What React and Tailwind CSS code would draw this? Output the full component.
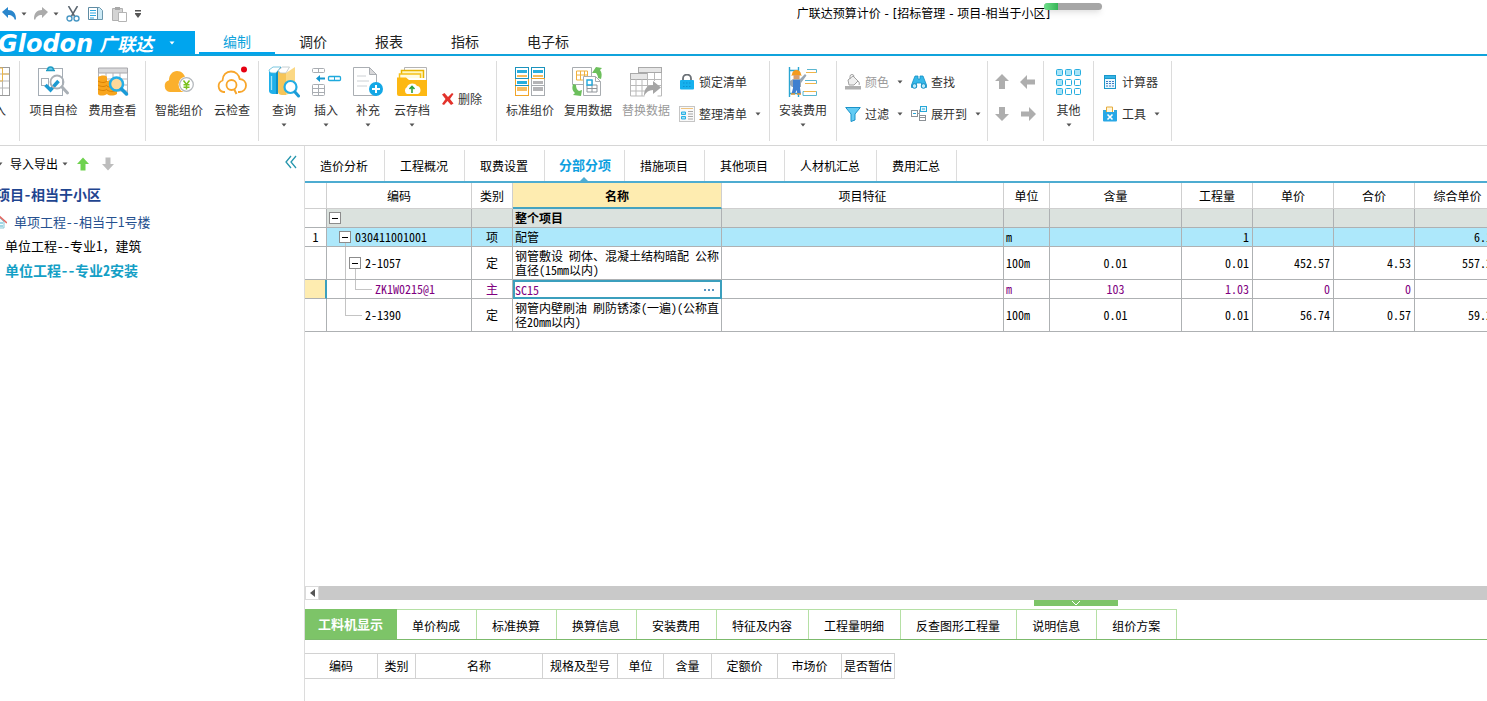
import React from "react";

/* ---------- small shared pieces ---------- */

function Caret({ className = "text-[#555]" }) {
  return (
    <svg width="6" height="4" viewBox="0 0 6 4" className={`shrink-0 ${className}`} aria-hidden="true">
      <path d="M.5 .5h5L3 3.500z" fill="currentColor" />
    </svg>
  );
}

function Svg({ w = 32, h = 32, children }) {
  return (
    <svg width={w} height={h} viewBox={`0 0 ${w} ${h}`} fill="none" className="shrink-0" aria-hidden="true">
      {children}
    </svg>
  );
}

/* ---------- ribbon icons ---------- */

const SheetIcon = () => (
  <Svg>
    <rect x="2.5" y="1.5" width="29" height="28" fill="#fff" stroke="#9a9a9a" />
    <path d="M3 8h28M3 15h28M3 22h28" stroke="#b5b5b5" />
    <path d="M10 2v27M17 2v27M24.500 2v27" stroke="#b5b5b5" />
    <path d="M17 2h7.500v13H17zM24.500 8H31" stroke="#eab54a" />
  </Svg>
);

const CheckIcon = () => (
  <Svg>
    <rect x="0.500" y="2.500" width="24" height="27" fill="#fff" stroke="#a5adb5" />
    <path d="M8 4.500h9M9.500 4.500c0-2 1-3.500 3-3.500s3 1.500 3 3.500" stroke="#1f9cc4" strokeWidth="1.500" fill="#6ccdea" />
    <rect x="3.500" y="12.500" width="7" height="7" stroke="#a5adb5" />
    <path d="M7.500 19l5 5 8-9" stroke="#1b9ad2" strokeWidth="3.500" />
    <circle cx="19" cy="16" r="6.500" stroke="#aab0b6" strokeWidth="1.800" />
    <path d="M24 21l5.500 6" stroke="#aab0b6" strokeWidth="3" strokeLinecap="round" />
  </Svg>
);

const FeeIcon = () => (
  <Svg>
    <path d="M1.500 2h29v5h-29z" fill="#d9d9db" stroke="#a8a8ac" />
    <path d="M1.500 7v6M30.500 7v20M9 7v8M16 7v6M23 7v6M1 13h29M18 19h12M20 25h10" stroke="#b4b4b8" />
    <path d="M1 11c3-2 8-2 9 0v4c4-2 9-1 10 1v12c-3 2-8 2-10 0-3 2-8 2-9 0z" fill="#f8a51d" />
    <path d="M1 15c3 2 7 2 9 0M1 19c3 2 7 2 9 0M1 23c3 2 7 2 9 0M10 20c3 2 7 2 9 0M10 24c3 2 7 2 9 0" stroke="#d98206" />
    <circle cx="19.500" cy="18" r="6.500" fill="#ffd89a" stroke="#25aee6" strokeWidth="2.500" />
    <path d="M24.500 23l5 5" stroke="#1a9bd8" strokeWidth="3.500" strokeLinecap="round" />
  </Svg>
);

const CloudYenIcon = () => (
  <Svg>
    <path d="M7 26a6 6 0 0 1-1-11.700C6 9 9.500 5 14 5s8 3.500 8.500 8c5 0 7 3.500 7 6.500s-2 6.500-6 6.500z" fill="#fbb02d" />
    <circle cx="23.500" cy="18.500" r="8" fill="#fff" />
    <circle cx="23.500" cy="18.500" r="6.800" stroke="#b5b9bd" strokeWidth="1.300" fill="#fff" />
    <path d="M20.500 14.500l3 4 3-4M23.500 18.500v5M20.500 18.700h6M20.500 21.200h6" stroke="#7cc21e" strokeWidth="1.500" />
  </Svg>
);

const CloudCheckIcon = () => (
  <Svg>
    <path d="M9 26H7.500a6 6 0 0 1-1-11.500C6.500 9 10.500 5.500 15 5.500s8 3 8.700 7.500c4 .3 6.300 3.200 6.300 6.500s-2.500 6.500-6.500 6.500H22" stroke="#f8a62b" strokeWidth="1.800" />
    <circle cx="15.500" cy="19" r="5" stroke="#f8a62b" strokeWidth="1.800" />
    <path d="M18 23l2.500 5" stroke="#f8a62b" strokeWidth="2" />
    <circle cx="28" cy="3.500" r="3" fill="#e60012" />
  </Svg>
);

const BooksIcon = () => (
  <Svg>
    <path d="M1 4c0 2 2 3 4 3h3v21H5c-2 0-4-1-4-3z" fill="#1fb0ea" />
    <path d="M1 4l4-3h8L8 7H5C3 7 1 6 1 4z" fill="#fff" stroke="#58b9d8" strokeWidth=".8" />
    <path d="M3.500 10v14" stroke="#a5e4f8" strokeWidth="1.300" />
    <path d="M8 7l5-6v4l-3 4v19H8z" fill="#0f8fc4" />
    <path d="M10 4c0 2 2 3 4 3h4v22h-4c-2 0-4-1-4-3z" fill="#f6c558" />
    <path d="M10.500 4l4-3h7L18 7h-4c-2 0-3.500-1-3.500-3z" fill="#fff" stroke="#b9c4c8" strokeWidth=".8" />
    <path d="M18 7l9-6v24l-9 4z" fill="#fbd884" />
    <circle cx="22.500" cy="21" r="6" fill="#fff" stroke="#23ade5" strokeWidth="2.200" />
    <path d="M27 26l3.500 4" stroke="#1a9bd8" strokeWidth="3" strokeLinecap="round" />
  </Svg>
);

const InsertIcon = () => (
  <Svg>
    <rect x="2.500" y="2.500" width="12" height="4" rx="1" stroke="#a9adb2" />
    <path d="M8.500 2v5" stroke="#a9adb2" />
    <rect x="18.500" y="10.500" width="12" height="4" rx="1" stroke="#1fa9dc" strokeWidth="1.300" />
    <path d="M24.500 10v5" stroke="#1fa9dc" />
    <path d="M6 12.500l4-3.500v2.500h5v2h-5V16z" fill="#1497d0" />
    <rect x="2.500" y="18.500" width="12" height="11" rx="1" stroke="#a9adb2" />
    <path d="M8.500 18v12M2 22.500h13M2 26.500h13" stroke="#a9adb2" />
  </Svg>
);

const SupplementIcon = () => (
  <Svg>
    <path d="M1.500 1.500h16l7 7v21h-23z" fill="#fff" stroke="#aaaeb3" />
    <path d="M17.500 1.500v7h7z" fill="#d8d8da" stroke="#aaaeb3" />
    <path d="M5 10h9M5 15h12M5 20h10" stroke="#ccd0d4" />
    <circle cx="24" cy="23" r="7" fill="#14a8e6" />
    <path d="M24 19v8M20 23h8" stroke="#fff" strokeWidth="2" />
  </Svg>
);

const CloudFolderIcon = () => (
  <Svg>
    <path d="M8.500 11V1.500h22V28" stroke="#b4b4b4" fill="#fff" />
    <path d="M5.500 11V4.500h22V12" stroke="#e8b400" fill="#fff6c0" strokeWidth="1.500" />
    <path d="M3.500 12V8h21v4" stroke="#f5c11a" fill="#fffbe0" strokeWidth="1.500" />
    <path d="M1 11.500h9l3 2.500h18v16H3a2 2 0 0 1-2-2z" fill="#fdb813" />
    <path d="M11 28a4 4 0 0 1 0-7c1-4 8-5 10-1 4 0 5 7 1 8z" fill="#fff" />
    <path d="M16 27v-6M13.500 23l2.500-2.500 2.500 2.500" stroke="#2fa03c" strokeWidth="1.600" />
  </Svg>
);

const DeleteIcon = () => (
  <Svg w={13} h={14}>
    <path d="M1 2.500L3.500 1l3.500 4L11 1l1.500 1L9 7l3.500 4.500L10 13 6.500 9 3 13l-2-1 3.500-5z" fill="#e3322b" />
  </Svg>
);

const StandardIcon = () => (
  <Svg>
    <rect x="1.500" y="1.500" width="13" height="11" fill="#fff" stroke="#1b93bd" />
    <rect x="3" y="4" width="10" height="3" fill="#27aede" />
    <rect x="3" y="9" width="10" height="2" fill="#f6bb5c" />
    <rect x="1.500" y="12.500" width="13" height="17" fill="#fff" stroke="#f0a52a" />
    <rect x="3" y="15" width="10" height="3" fill="#27aede" />
    <rect x="3" y="21" width="10" height="4" fill="#f8bd60" />
    <path d="M1 12.500h14M1 19.500h14" stroke="#1b93bd" />
    <rect x="17.500" y="1.500" width="13" height="11" fill="#fff" stroke="#1b93bd" />
    <rect x="19" y="4" width="10" height="3" fill="#27aede" />
    <rect x="19" y="9" width="10" height="2" fill="#f6bb5c" />
    <rect x="17.500" y="12.500" width="13" height="17" fill="#fff" stroke="#a8acb0" />
    <rect x="19" y="15" width="10" height="3" fill="#b4b4b6" />
    <rect x="19" y="21" width="10" height="4" fill="#b4b4b6" />
    <path d="M17 12.500h14" stroke="#f0a52a" />
    <path d="M17 19.500h14" stroke="#a8acb0" />
  </Svg>
);

const ReuseIcon = () => (
  <Svg>
    <path d="M.5 1.500h19v17H.5z" fill="#fff" stroke="#a8acb0" />
    <path d="M4.500 5h11v9h-11zM4.500 9h11M8.500 5v9M12.500 5v9" stroke="#f0b03d" />
    <path d="M11.500 10.500h12l5 5v14h-17z" fill="#fff" stroke="#a8acb0" />
    <path d="M23.500 10.500v5h5" stroke="#a8acb0" />
    <path d="M15 19h10v7H15zM15 22.500h10M20 14v12" stroke="#8f9499" />
    <path d="M15 14h5v5h-5z" stroke="#22a8dc" strokeWidth="1.400" fill="#fff" />
    <path d="M20 7l4-6 6 1-2 2c2 3 2 5 1 9l-3-1c0-2-1-4-2-5z" fill="#6cbf5c" />
    <path d="M10 24l-1 6-8-1 2-2c-3-3-3-5-2-9l3 1c0 3 1 5 3 6z" fill="#6cbf5c" />
  </Svg>
);

const ReplaceIcon = () => (
  <Svg>
    <rect x="8.500" y="1.500" width="23" height="5" fill="#e6e6e6" stroke="#a9a9a9" />
    <rect x="0.500" y="7.500" width="17" height="6" fill="#e6e6e6" stroke="#a9a9a9" />
    <path d="M.5 13v17h14M.5 19.500h22M.5 25h15M6 13v17M12 13v17M17.500 7v18M24.500 7v8M31.500 7v23h-4M17 13.500h14M26 19.500h5" stroke="#b9b9b9" />
    <path d="M14 30c0-8 4-11 9-11v-4l8 6.500-8 6.500v-4c-4 0-7 2-9 6z" fill="#a5a5a5" />
  </Svg>
);

const LockIcon = () => (
  <Svg w={16} h={16}>
    <path d="M4 7V4.500a4 4 0 0 1 8 0V7" stroke="#6a7076" strokeWidth="1.800" />
    <rect x="1" y="6" width="14" height="9.500" rx="1" fill="#16b1ee" />
    <path d="M4 9h8M4 12.500h8" stroke="#0d8fd0" strokeDasharray="1.500 1.500" />
  </Svg>
);

const TidyIcon = () => (
  <Svg w={16} h={16}>
    <rect x=".5" y=".5" width="15" height="15" fill="#f9f9f9" stroke="#c5c5c5" />
    <path d="M2 2.500h12" stroke="#f0c37d" />
    <path d="M2.500 6h4v2.500h-4zM2.500 10.500h4V13h-4z" stroke="#27b0e4" fill="#9ddff7" />
    <path d="M9 5.500h5M9 8h5M9 10.500h5M9 13h5" stroke="#a8a8a8" />
  </Svg>
);

const InstallIcon = () => (
  <Svg>
    <path d="M2.500 1v30M11.500 1v30M2 4.500h10M2 27.500h10" stroke="#2aa5d2" strokeWidth="1.400" />
    <path d="M5 8.500a4.500 4.500 0 0 1 9 0l1 1H4z" fill="#f39a1e" />
    <rect x="6.500" y="9" width="6" height="4.500" fill="#d99e6c" />
    <path d="M3 15l3-2h7l5-5 1.500 1.500L14 17v4H5l-2-2z" fill="#9aa7b5" />
    <path d="M6 14h7v8l1 6h-3.500L9.500 24 8 28H4.500L6 22z" fill="#3f7fd0" />
    <path d="M4 28h4M10 28h4" stroke="#e09a38" strokeWidth="1.500" />
    <path d="M20 3.500h9.500v3H19M18 14.500h11.500v3H18M16 25.500h13.500v4H16z" stroke="#5bb6cf" />
    <path d="M19 6.500h10M18 17.500h11M17 25.500h12" stroke="#f0b549" />
  </Svg>
);

const BucketIcon = () => (
  <Svg w={16} h={16}>
    <path d="M3 6l5-4 5 5-4 4H4z" fill="#efefef" stroke="#a0a0a0" />
    <path d="M5 5V2.500a2 2 0 0 1 4 0M13 7c1.500 1 1.500 3 1 4" stroke="#a0a0a0" />
    <rect x="0" y="12" width="16" height="3.500" fill="#b0b0b0" />
  </Svg>
);

const FunnelIcon = () => (
  <Svg w={16} h={16}>
    <path d="M.7 1.500h14.600L10 8v6l-4 1.500V8z" fill="#63cbf3" stroke="#1b93c9" />
  </Svg>
);

const BinocularsIcon = () => (
  <Svg w={16} h={16}>
    <path d="M4 2h3v3h2V2h3l3.500 9v2.500h-5V9h-5v4.500h-5V11z" fill="#35b8e9" stroke="#138fc4" strokeWidth=".8" />
    <circle cx="3.500" cy="12" r="2.300" fill="#bdeafb" stroke="#138fc4" />
    <circle cx="12.500" cy="12" r="2.300" fill="#bdeafb" stroke="#138fc4" />
  </Svg>
);

const ExpandIcon = () => (
  <Svg w={16} h={16}>
    <rect x=".5" y="4.500" width="6" height="6" fill="#fff" stroke="#8c9196" />
    <path d="M2 7.500h3" stroke="#27a7d8" />
    <path d="M7 7.500h1.500M8.500 3.500v9" stroke="#9aa0a5" />
    <rect x="9.500" y=".5" width="6" height="5" fill="#e8f7fd" stroke="#27a7d8" />
    <path d="M11 3h3" stroke="#27a7d8" />
    <rect x="8.500" y="9.500" width="6" height="5" fill="#fff" stroke="#8c9196" />
    <path d="M9 11.500h5" stroke="#8c9196" />
  </Svg>
);

const MoveArrow = ({ d }) => (
  <Svg w={16} h={16}>
    <path d={d} fill="#aeaeae" />
  </Svg>
);

const GridIcon = () => (
  <Svg>
    {[3, 13, 22].map((y, r) =>
      [3, 12, 21].map((x, c) => (
        <rect key={`${x}-${y}`} x={x + 0.5} y={y + 0.5} width="6" height="6" rx="1" fill={r === 0 || c === 0 ? "#a8e4f8" : "#fff"} stroke="#27aee0" />
      ))
    )}
  </Svg>
);

const CalculatorIcon = () => (
  <Svg w={16} h={16}>
    <rect x="2.500" y="1.500" width="11" height="13" fill="#eaf8fd" stroke="#1a97ca" />
    <rect x="2.500" y="1.500" width="11" height="3" fill="#35b4e6" stroke="#1a97ca" />
    <path d="M4 7.500h8M4 9.500h8M4 12h8" stroke="#3d79c4" strokeDasharray="2 1" />
  </Svg>
);

const ToolsIcon = () => (
  <Svg w={16} h={16}>
    <path d="M1 4h3v3H1zM12 4h3v3h-3z" fill="#35a9dc" />
    <path d="M4.500 1h6v6h-6z" fill="#fff5d9" stroke="#e5ab3c" />
    <rect x="1" y="6" width="14" height="9.500" rx="1" fill="#28a8e6" />
    <path d="M5.500 8.500l5 5M10.500 8.500l-5 5" stroke="#fff" strokeWidth="1.600" />
  </Svg>
);

/* ---------- ribbon controls ---------- */

function BigButton({ icon, label, width, caret, muted }) {
  return (
    <button type="button" className={`flex shrink-0 flex-col items-center pt-[5px] ${width}`}>
      {icon}
      <span className={`mt-1 text-xs leading-4 whitespace-nowrap ${muted ? "text-[#999]" : "text-[#333]"}`}>{label}</span>
      {caret && <Caret className="mt-[5px] text-[#555]" />}
    </button>
  );
}

function RowButton({ icon, label, caret, muted }) {
  return (
    <button type="button" className="flex h-4 items-center gap-1 whitespace-nowrap">
      {icon}
      <span className={`text-xs leading-4 ${muted ? "text-[#999]" : "text-[#333]"}`}>{label}</span>
      {caret && <Caret className="ml-1 text-[#555]" />}
    </button>
  );
}

function Group({ className, children }) {
  return <div className={`flex h-20 shrink-0 border-r border-[#dcdcdc] ${className}`}>{children}</div>;
}

const UP = "M8 0l7 7h-4v8H5V7H1z";
const DOWN = "M8 15l7-7h-4V1H5v7H1z";
const LEFT = "M0 8l7-7v4.500h8v5H7V15z";
const RIGHT = "M16 8L9 1v4.500H1v5h8V15z";

function Ribbon() {
  return (
    <div className="flex h-[90px] overflow-hidden border-b border-[#d6d6d6] pt-[5px]">
      <Group className="w-5 justify-end overflow-hidden pr-[5px]">
        <BigButton icon={<SheetIcon />} label="导入" width="w-10" />
      </Group>
      <Group className="w-[126px] pl-1">
        <BigButton icon={<CheckIcon />} label="项目自检" width="w-[59px]" />
        <BigButton icon={<FeeIcon />} label="费用查看" width="w-[59px]" />
      </Group>
      <Group className="w-[113px] pl-1">
        <BigButton icon={<CloudYenIcon />} label="智能组价" width="w-[58px]" />
        <BigButton icon={<CloudCheckIcon />} label="云检查" width="w-12" />
      </Group>
      <Group className="w-[238px] pl-1">
        <BigButton icon={<BooksIcon />} label="查询" width="w-[42px]" caret />
        <BigButton icon={<InsertIcon />} label="插入" width="w-[42px]" caret />
        <BigButton icon={<SupplementIcon />} label="补充" width="w-[42px]" caret />
        <BigButton icon={<CloudFolderIcon />} label="云存档" width="w-[46px]" caret />
        <div className="flex items-center pb-1 pl-1.5">
          <RowButton icon={<DeleteIcon />} label="删除" />
        </div>
      </Group>
      <Group className="w-[273px] pl-1">
        <BigButton icon={<StandardIcon />} label="标准组价" width="w-[58px]" />
        <BigButton icon={<ReuseIcon />} label="复用数据" width="w-[58px]" />
        <BigButton icon={<ReplaceIcon />} label="替换数据" width="w-[58px]" muted />
        <div className="flex flex-col items-start gap-4 pt-[13px] pl-1">
          <RowButton icon={<LockIcon />} label="锁定清单" />
          <RowButton icon={<TidyIcon />} label="整理清单" caret />
        </div>
      </Group>
      <Group className="w-[67px]">
        <BigButton icon={<InstallIcon />} label="安装费用" width="w-[66px]" caret />
      </Group>
      <Group className="w-[151px] gap-2 pl-2">
        <div className="flex flex-col items-start gap-4 pt-[13px]">
          <RowButton icon={<BucketIcon />} label="颜色" caret muted />
          <RowButton icon={<FunnelIcon />} label="过滤" caret />
        </div>
        <div className="flex flex-col items-start gap-4 pt-[13px]">
          <RowButton icon={<BinocularsIcon />} label="查找" />
          <RowButton icon={<ExpandIcon />} label="展开到" caret />
        </div>
      </Group>
      <Group className="w-14">
        <div className="grid grid-cols-2 content-start gap-x-[10px] gap-y-4 pt-[13px] pl-1.5">
          <button type="button" aria-label="上移"><MoveArrow d={UP} /></button>
          <button type="button" aria-label="左移"><MoveArrow d={LEFT} /></button>
          <button type="button" aria-label="下移"><MoveArrow d={DOWN} /></button>
          <button type="button" aria-label="右移"><MoveArrow d={RIGHT} /></button>
        </div>
      </Group>
      <Group className="w-[50px]">
        <BigButton icon={<GridIcon />} label="其他" width="w-[49px]" caret />
      </Group>
      <Group className="w-[78px] pl-2">
        <div className="flex flex-col items-start gap-4 pt-[13px]">
          <RowButton icon={<CalculatorIcon />} label="计算器" />
          <RowButton icon={<ToolsIcon />} label="工具" caret />
        </div>
      </Group>
    </div>
  );
}

/* ---------- title bar and menu ---------- */

function TitleBar() {
  return (
    <header className="relative flex h-[31px] items-center">
      <div className="flex items-center pb-1">
        <button type="button" aria-label="撤销" className="ml-0.5">
          <Svg w={15} h={16}>
            <path d="M0 6l6-5v3c5 0 8 3 8 9l-1 1c-1-3-3-5-7-5v3z" fill="#2a86cc" />
          </Svg>
        </button>
        <Caret className="ml-1 text-[#555]" />
        <button type="button" aria-label="重做" className="ml-[7px]">
          <Svg w={15} h={16}>
            <path d="M14 6L8 1v3c-5 0-8 3-8 9l1 1c1-3 3-5 7-5v3z" fill="#ababab" />
          </Svg>
        </button>
        <Caret className="ml-1 text-[#555]" />
        <button type="button" aria-label="剪切" className="ml-[7px]">
          <Svg w={14} h={16}>
            <path d="M2.500 0L9 11M11.500 0L5 11" stroke="#5b6670" strokeWidth="1.500" />
            <circle cx="3.500" cy="12.500" r="2.500" stroke="#4a98c4" strokeWidth="1.400" />
            <circle cx="10.500" cy="12.500" r="2.500" stroke="#4a98c4" strokeWidth="1.400" />
          </Svg>
        </button>
        <button type="button" aria-label="复制" className="ml-2">
          <Svg w={16} h={16}>
            <path d="M6.500 1.500h5l3 3v9h-8z" fill="#cdeaf6" stroke="#6d98ad" />
            <path d="M.5 1.500h9v12h-9z" fill="#fff" stroke="#5d8ba3" />
            <path d="M2 4.500h6M2 7h6M2 9.500h6M2 12h4" stroke="#2ea8df" strokeWidth="1.200" />
          </Svg>
        </button>
        <button type="button" aria-label="粘贴" className="ml-2">
          <Svg w={16} h={16}>
            <path d="M.5 2.500h10v12H.5z" fill="#d4d4d4" stroke="#b0b0b0" />
            <path d="M3 1h5v3H3z" fill="#a8a8a8" />
            <path d="M6.500 6.500h8v9h-8z" fill="#fff" stroke="#b4b4b4" />
          </Svg>
        </button>
        <button type="button" aria-label="更多" className="ml-[7px]">
          <Svg w={6} h={8}>
            <path d="M0 0h6v1.500H0zM0 3h6v1H0zM0 4h6L3 8z" fill="#555" />
          </Svg>
        </button>
      </div>
      <h1 className="absolute inset-x-0 top-1.5 pl-[360px] text-center font-['DejaVu_Sans','Noto_Sans_CJK_SC',sans-serif] text-xs leading-4 text-black">
        广联达预算计价 - [招标管理 - 项目-相当于小区]
      </h1>
      <div className="absolute top-[3px] left-[1044px] h-[7px] w-[58px] overflow-hidden rounded-full bg-[#a6a6a6] shadow-md">
        <div className="h-full w-[14px] bg-linear-to-r from-[#6fe08a] to-[#35b457]" />
      </div>
    </header>
  );
}

function MenuBar() {
  const items = ["调价", "报表", "指标"];
  return (
    <nav className="flex h-[25px] overflow-hidden border-b-2 border-[#10a3dc]">
      <button type="button" className="flex h-6 w-[195px] shrink-0 items-center bg-[#00a5ee] text-white">
        <span className="-ml-0.5 pt-0.5 font-['DejaVu_Sans',sans-serif] text-[24px] leading-[22px] font-bold italic">Glodon</span>
        <span className="ml-1.5 text-lg leading-6 font-bold italic whitespace-nowrap">广联达</span>
        <Caret className="ml-4 text-white" />
      </button>
      <button type="button" className="ml-1 w-[76px] border-b-2 border-[#00a5ee] pb-0.5 text-sm leading-5 text-[#10a3dc]">编制</button>
      {items.map((t) => (
        <button key={t} type="button" className="w-[76px] border-b-2 border-white pb-0.5 text-sm leading-5 text-[#222]">{t}</button>
      ))}
      <button type="button" className="w-[90px] border-b-2 border-white pb-0.5 text-sm leading-5 text-[#222]">电子标</button>
    </nav>
  );
}

/* ---------- project tree ---------- */

function Sidebar() {
  return (
    <aside className="w-[305px] shrink-0 overflow-hidden border-r border-[#dcdcdc] pt-2">
      <div className="flex h-5 items-center">
        <Caret className="-ml-[3px] text-[#555]" />
        <button type="button" className="ml-[7px] flex items-center gap-1 text-xs leading-4 text-black">
          导入导出
          <Caret className="text-[#555]" />
        </button>
        <button type="button" aria-label="上移" className="ml-2">
          <Svg w={14} h={16}>
            <path d="M7 1.500l6 6.500H9.500v6.500h-5V8H1z" fill="#6fd24f" />
          </Svg>
        </button>
        <button type="button" aria-label="下移" className="ml-[11px]">
          <Svg w={14} h={16}>
            <path d="M7 14.500L13 8H9.500V1.500h-5V8H1z" fill="#bdbdbd" />
          </Svg>
        </button>
        <button type="button" aria-label="收起" className="mr-[7px] mb-1 ml-auto">
          <Svg w={12} h={14}>
            <path d="M6 1L1 7l5 6M11 1L6 7l5 6" stroke="#2596ad" strokeWidth="1.300" />
          </Svg>
        </button>
      </div>
      <ul className="mt-2 font-['Noto_Sans_Mono_CJK_SC','Noto_Sans_CJK_SC',sans-serif] whitespace-nowrap">
        <li>
          <a href="#project" className="-ml-1 block text-sm leading-6 font-bold text-[#1f4590]">项目-相当于小区</a>
        </li>
        <li className="mt-1">
          <a href="#building" className="flex items-center text-[13px] leading-6 text-[#25508f]">
            <span className="-ml-[9px] mr-[7px]">
              <Svg w={16} h={14}>
                <path d="M3 7v6h10V7L8 2z" fill="#f2fafc" stroke="#8cc8d8" />
                <path d="M0 8l8-7 8 7" stroke="#e46a63" strokeWidth="1.600" />
                <path d="M9 8h3M9 11h3" stroke="#4fb3cc" />
              </Svg>
            </span>
            单项工程--相当于1号楼
          </a>
        </li>
        <li>
          <a href="#unit-1" className="ml-[5px] block text-[13px] leading-6 text-black">单位工程--专业1，建筑</a>
        </li>
        <li>
          <a href="#unit-2" className="ml-[5px] block text-sm leading-6 font-bold text-[#149fc6]">单位工程--专业2安装</a>
        </li>
      </ul>
    </aside>
  );
}

/* ---------- bill of quantities ---------- */

function MainTabs() {
  const tabs = ["造价分析", "工程概况", "取费设置", "分部分项", "措施项目", "其他项目", "人材机汇总", "费用汇总"];
  return (
    <div role="tablist" className="flex h-[37px] border-b-2 border-[#4dacd1] pt-1">
      {tabs.map((t) =>
        t === "分部分项" ? (
          <button key={t} role="tab" aria-selected="true" type="button" className="relative border-r border-[#dcdcdc] pr-[13px] pb-0.5 pl-[14px] text-[13px] leading-4 font-bold text-[#0d9fe0]">
            {t}
            <svg width="8" height="4" viewBox="0 0 8 4" className="absolute bottom-0 left-[35px]" aria-hidden="true">
              <path d="M4 0l4 4H0z" fill="#4dacd1" />
            </svg>
          </button>
        ) : (
          <button key={t} role="tab" aria-selected="false" type="button" className="border-r border-[#dcdcdc] px-[15px] pr-4 text-xs leading-4 text-black">{t}</button>
        )
      )}
    </div>
  );
}

const Line = ({ className }) => <span className={`absolute bg-[#c4c4c4] ${className}`} />;

function Toggle() {
  return (
    <button type="button" aria-label="折叠" className="relative flex size-3 shrink-0 items-center justify-center border border-[#8c8c8c] bg-white">
      <span className="h-px w-1.5 bg-black" />
    </button>
  );
}

const ROWS = [
  {
    no: "", tone: "bg-[#dbe2de]", height: "h-[19px]",
    code: <div className="flex items-center pl-0.5"><Toggle /></div>,
    kind: "", name: <b>整个项目</b>, unit: "", content: "", qty: "", price: "", total: "", all: "",
  },
  {
    no: "1", tone: "bg-[#ade8fb]", height: "h-[19px]",
    code: (
      <div className="flex items-center gap-1 pl-3">
        <Line className="top-3 bottom-0 left-[18px] w-px" />
        <Toggle />030411001001
      </div>
    ),
    kind: "项", name: "配管", unit: "m", content: "", qty: "1", price: "", total: "", all: "6.1",
  },
  {
    no: "", tone: "bg-white", height: "h-[33px]",
    code: (
      <div className="flex items-center gap-1 pl-[22px]">
        <Line className="top-0 bottom-0 left-[18px] w-px" />
        <Line className="top-5 bottom-0 left-[28px] w-px" />
        <Toggle />2-1057
      </div>
    ),
    kind: "定", name: <>钢管敷设 砌体、混凝土结构暗配 公称<br />直径(15mm以内)</>,
    unit: "100m", content: "0.01", qty: "0.01", price: "452.57", total: "4.53", all: "557.2",
  },
  {
    no: "", tone: "bg-white text-[#800080]", height: "h-[19px]", editing: true,
    code: (
      <div className="pl-12">
        <Line className="top-0 bottom-0 left-[18px] w-px" />
        <Line className="top-0 left-[28px] h-[9px] w-px" />
        <Line className="top-[9px] left-[28px] h-px w-[17px]" />
        ZK1W0215@1
      </div>
    ),
    kind: "主", name: "SC15", unit: "m", content: "103", qty: "1.03", price: "0", total: "0", all: "",
  },
  {
    no: "", tone: "bg-white", height: "h-[33px]",
    code: (
      <div className="pl-[38px]">
        <Line className="top-0 left-[18px] h-4 w-px" />
        <Line className="top-4 left-[18px] h-px w-[17px]" />
        2-1390
      </div>
    ),
    kind: "定", name: <>钢管内壁刷油 刷防锈漆(一遍)(公称直<br />径20mm以内)</>,
    unit: "100m", content: "0.01", qty: "0.01", price: "56.74", total: "0.57", all: "59.2",
  },
];

const CELL = "border-r border-b border-[#aeb1b3] p-0";
const HEAD = "border-r border-b border-[#cfcfcf] p-0 font-normal";

function BillTable() {
  return (
    <div className="overflow-hidden">
      <table className="w-full min-w-[1196px] table-fixed border-separate border-spacing-0 font-['Noto_Sans_Mono_CJK_SC','Noto_Sans_CJK_SC',monospace] text-xs leading-[14px] whitespace-nowrap text-black">
        <colgroup>
          <col className="w-[22px]" />
          <col className="w-[145px]" />
          <col className="w-[41px]" />
          <col className="w-[209px]" />
          <col />
          <col className="w-[46px]" />
          <col className="w-[132px]" />
          <col className="w-[71px]" />
          <col className="w-[81px]" />
          <col className="w-[81px]" />
          <col className="w-[86px]" />
        </colgroup>
        <thead>
          <tr className="h-[26px]">
            <th className={HEAD} aria-label="序号"></th>
            <th className={HEAD}>编码</th>
            <th className={HEAD}>类别</th>
            <th className="border-r border-b-2 border-r-[#cfcfcf] border-b-[#45a3c0] bg-[#feecb0] p-0 pt-px font-bold">名称</th>
            <th className={HEAD}>项目特征</th>
            <th className={HEAD}>单位</th>
            <th className={HEAD}>含量</th>
            <th className={HEAD}>工程量</th>
            <th className={HEAD}>单价</th>
            <th className={HEAD}>合价</th>
            <th className={HEAD}>综合单价</th>
          </tr>
        </thead>
        <tbody>
          {ROWS.map((r, i) => (
            <tr key={i} className={`${r.height} ${r.tone}`}>
              <td className={r.editing ? "border-r-2 border-b border-r-[#3b9fbd] border-b-[#aeb1b3] bg-[#feecb0] p-0" : `${CELL} bg-white text-center`}>{r.no}</td>
              <td className={`${CELL} relative`}>{r.code}</td>
              <td className={`${CELL} text-center`}>{r.kind}</td>
              {r.editing ? (
                <td className="border-2 border-[#3b9fbd] p-0">
                  <div className="flex h-[15px] items-center">
                    <input aria-label="名称" defaultValue={r.name} className="w-0 flex-1 bg-transparent leading-[14px] outline-none" />
                    <button type="button" aria-label="选择" className="flex gap-0.5 px-1.5">
                      <span className="size-0.5 bg-[#5a93bd]" />
                      <span className="size-0.5 bg-[#5a93bd]" />
                      <span className="size-0.5 bg-[#5a93bd]" />
                    </button>
                  </div>
                </td>
              ) : (
                <td className={`${CELL} pl-0.5`}>{r.name}</td>
              )}
              <td className={CELL}></td>
              <td className={`${CELL} pl-0.5`}>{r.unit}</td>
              <td className={`${CELL} text-center`}>{r.content}</td>
              <td className={`${CELL} pr-[3px] text-right`}>{r.qty}</td>
              <td className={`${CELL} pr-[3px] text-right`}>{r.price}</td>
              <td className={`${CELL} pr-[3px] text-right`}>{r.total}</td>
              <td className={`${CELL} pr-2 text-right`}>{r.all}</td>
            </tr>
          ))}
        </tbody>
      </table>
    </div>
  );
}

/* ---------- detail panel ---------- */

function DetailPanel() {
  const tabs = ["单价构成", "标准换算", "换算信息", "安装费用", "特征及内容", "工程量明细", "反查图形工程量", "说明信息", "组价方案"];
  const cols = [
    ["编码", "w-[73px]"], ["类别", "w-[38px]"], ["名称", "w-[127px]"], ["规格及型号", "w-[75px]"], ["单位", "w-[46px]"],
    ["含量", "w-12"], ["定额价", "w-[66px]"], ["市场价", "w-16"], ["是否暂估", "w-[53px]"],
  ];
  return (
    <section className="h-[115px] shrink-0">
      <div className="flex h-[14px] bg-[#c9c9c9]">
        <button type="button" aria-label="向左滚动" className="flex w-[14px] items-center justify-center border border-[#dadada] bg-white">
          <svg width="5" height="8" viewBox="0 0 5 8" aria-hidden="true">
            <path d="M5 0v8L0 4z" fill="#555" />
          </svg>
        </button>
      </div>
      <div className="flex h-[9px] pl-[729px]">
        <button type="button" aria-label="收起面板" className="flex h-1.5 w-[84px] items-center justify-center bg-[#7dc468]">
          <svg width="10" height="5" viewBox="0 0 10 5" fill="none" aria-hidden="true">
            <path d="M1 0l4 4 4-4" stroke="#fff" />
          </svg>
        </button>
      </div>
      <div role="tablist" className="flex h-[31px] border-b border-[#7cba6c]">
        <button role="tab" aria-selected="true" type="button" className="bg-[#7dc468] pr-[14px] pl-[13px] text-[13px] leading-4 font-bold text-white">工料机显示</button>
        {tabs.map((t) => (
          <button key={t} role="tab" aria-selected="false" type="button" className="border-t border-r border-[#b5e0a5] pt-0.5 pr-4 pl-[15px] text-xs leading-4 text-black">{t}</button>
        ))}
      </div>
      <table className="mt-[13px] table-fixed border-separate border-spacing-0 text-xs leading-4 whitespace-nowrap text-black">
        <thead>
          <tr className="h-[26px]">
            {cols.map(([t, w]) => (
              <th key={t} className={`border-y border-r border-[#d2d2d2] p-0 font-normal ${w}`}>{t}</th>
            ))}
          </tr>
        </thead>
      </table>
    </section>
  );
}

export default function App() {
  return (
    <div className="flex min-h-screen flex-col overflow-hidden bg-white font-['Noto_Sans_CJK_SC',sans-serif]">
      <TitleBar />
      <MenuBar />
      <Ribbon />
      <div className="flex flex-1">
        <Sidebar />
        <main className="flex min-w-0 flex-1 flex-col">
          <MainTabs />
          <div className="flex-1">
            <BillTable />
          </div>
          <DetailPanel />
        </main>
      </div>
    </div>
  );
}
